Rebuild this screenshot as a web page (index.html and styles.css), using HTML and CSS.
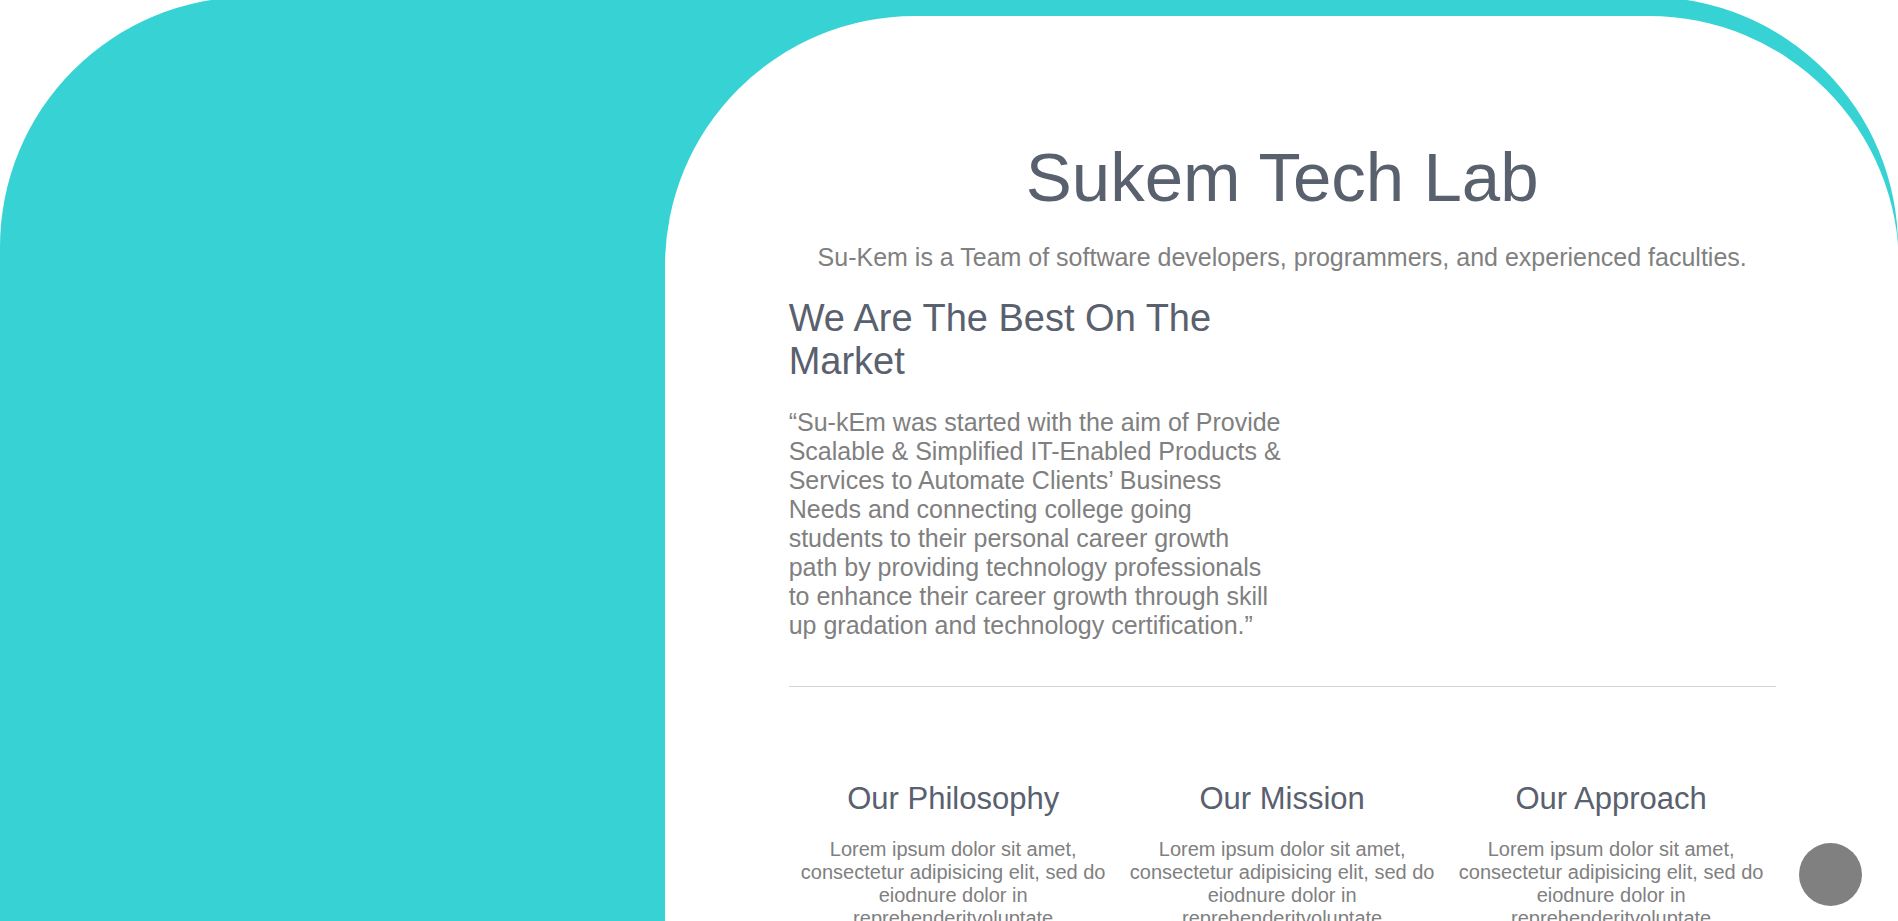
FILE: index.html
```
<!DOCTYPE html>
<html lang="en">
<head>
<meta charset="utf-8">
<title>Sukem Tech Lab</title>
<link rel="stylesheet" href="styles.css">
</head>
<body>
<main class="about">
  <section class="panel">
    <h1 class="title">Sukem Tech Lab</h1>
    <p class="tagline">Su-Kem is a Team of software developers, programmers, and experienced faculties.</p>
    <div class="intro">
      <h2 class="intro-title">We Are The Best On The Market</h2>
      <p class="intro-text">“Su-kEm was started with the aim of Provide Scalable &amp; Simplified IT-Enabled Products &amp; Services to Automate Clients’ Business Needs and connecting college going students to their personal career growth path by providing technology professionals to enhance their career growth through skill up gradation and technology certification.”</p>
    </div>
    <div class="values">
      <article class="value">
        <h3 class="value-title">Our Philosophy</h3>
        <p class="value-text">Lorem ipsum dolor sit amet, consectetur adipisicing elit, sed do eiodnure dolor in reprehenderitvoluptate</p>
      </article>
      <article class="value">
        <h3 class="value-title">Our Mission</h3>
        <p class="value-text">Lorem ipsum dolor sit amet, consectetur adipisicing elit, sed do eiodnure dolor in reprehenderitvoluptate</p>
      </article>
      <article class="value">
        <h3 class="value-title">Our Approach</h3>
        <p class="value-text">Lorem ipsum dolor sit amet, consectetur adipisicing elit, sed do eiodnure dolor in reprehenderitvoluptate</p>
      </article>
    </div>
  </section>
</main>
<button class="to-top" type="button" aria-label="Back to top"></button>
</body>
</html>
```
FILE: styles.css
```
* {
  box-sizing: border-box;
  margin: 0;
  padding: 0;
}

html {
  scrollbar-width: none;
}

body {
  background: #fff;
  color: #808080;
  font-family: Arial, "Liberation Sans", sans-serif;
}

.about {
  display: flex;
  justify-content: flex-end;
  overflow: hidden;
  margin-top: -3px;
  padding-top: 19px;
  background: #36d2d4;
  border-radius: 250px 250px 0 0;
}

.panel {
  width: 65%;
  margin-right: -1px;
  padding: 122px 6.5% 60px;
  background: #fff;
  border-radius: 250px 250px 0 0;
}

.title,
.intro-title,
.value-title {
  color: #59606e;
  font-weight: 400;
}

.title {
  font-size: 69px;
  line-height: 80px;
  text-align: center;
}

.tagline {
  margin: 25px 0;
  font-size: 25px;
  line-height: 29px;
  text-align: center;
}

.intro {
  width: 50%;
}

.intro-title {
  margin-bottom: 25px;
  font-size: 38px;
  line-height: 43px;
}

.intro-text {
  font-size: 25px;
  line-height: 29px;
}

.values {
  display: grid;
  grid-template-columns: repeat(3, 1fr);
  margin-top: 46px;
  padding-top: 94px;
  border-top: 1px solid #d3d3d3;
}

.value {
  padding: 0 10px;
  text-align: center;
}

.value-title {
  margin-bottom: 22px;
  font-size: 31px;
  line-height: 35px;
}

.value-text {
  font-size: 20px;
  line-height: 23px;
}

.to-top {
  position: fixed;
  right: 36px;
  bottom: 15px;
  width: 63px;
  height: 63px;
  border: 0;
  border-radius: 50%;
  background: #808080;
  cursor: pointer;
}
```
